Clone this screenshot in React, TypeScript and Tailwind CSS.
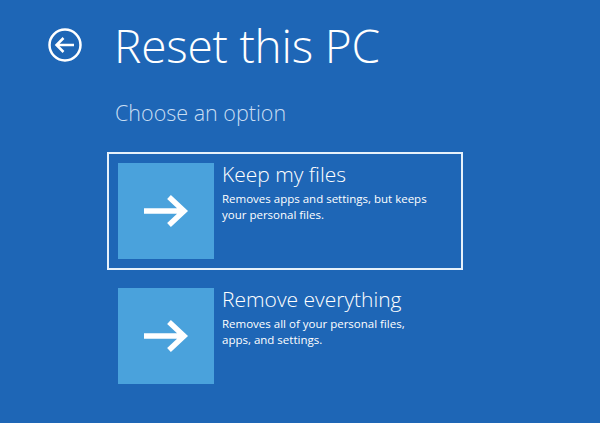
import React from "react";

const Arrow = () => (
  <svg width="48" height="34" viewBox="0 0 48 34" fill="none">
    <path d="M2 17 H42 M27 3 L42 17 L27 31" stroke="white" strokeWidth="5.5" strokeLinecap="butt" strokeLinejoin="miter" />
  </svg>
);

const Option = ({ title, desc, selected }: { title: string; desc: string[]; selected?: boolean }) => (
  <div className={`w-[356px] p-[9px] border-2 ${selected ? "border-[#e6f1fb]" : "border-transparent"}`}>
    <div className="flex gap-[8px]">
      <div className="w-[96px] h-[96px] bg-[#4aa2dc] flex items-center justify-center shrink-0">
        <Arrow />
      </div>
      <div className="flex flex-col">
        <div className="text-[21px] leading-[28px] font-light text-white -mt-[3px]">{title}</div>
        <div className="text-[11.5px] leading-[16px] text-white mt-[3px]">
          {desc.map((d, i) => (
            <div key={i}>{d}</div>
          ))}
        </div>
      </div>
    </div>
  </div>
);

export default function App() {
  return (
    <div
      className="w-[600px] h-[423px] bg-[#1e66b6] overflow-hidden"
      style={{ fontFamily: '"Open Sans", "Noto Sans", sans-serif' }}
    >
      <div className="flex items-center pt-[17px] pl-[47px]">
        <svg width="36" height="36" viewBox="0 0 36 36" fill="none">
          <circle cx="18" cy="18" r="15.5" stroke="white" strokeWidth="2.5" />
          <path d="M27 18 H10 M16.5 11 L9.5 18 L16.5 25" stroke="white" strokeWidth="2.5" />
        </svg>
        <div className="ml-[31px] text-[46px] leading-[56px] font-light text-white tracking-[-0.2px]">Reset this PC</div>
      </div>
      <div className="pl-[115px] mt-[25px] text-[21.5px] leading-[29px] text-[#c9def3] font-light">Choose an option</div>
      <div className="pl-[107px] mt-[25px] flex flex-col gap-[7px]">
        <Option
          selected
          title="Keep my files"
          desc={["Removes apps and settings, but keeps", "your personal files."]}
        />
        <Option
          title="Remove everything"
          desc={["Removes all of your personal files,", "apps, and settings."]}
        />
      </div>
    </div>
  );
}
